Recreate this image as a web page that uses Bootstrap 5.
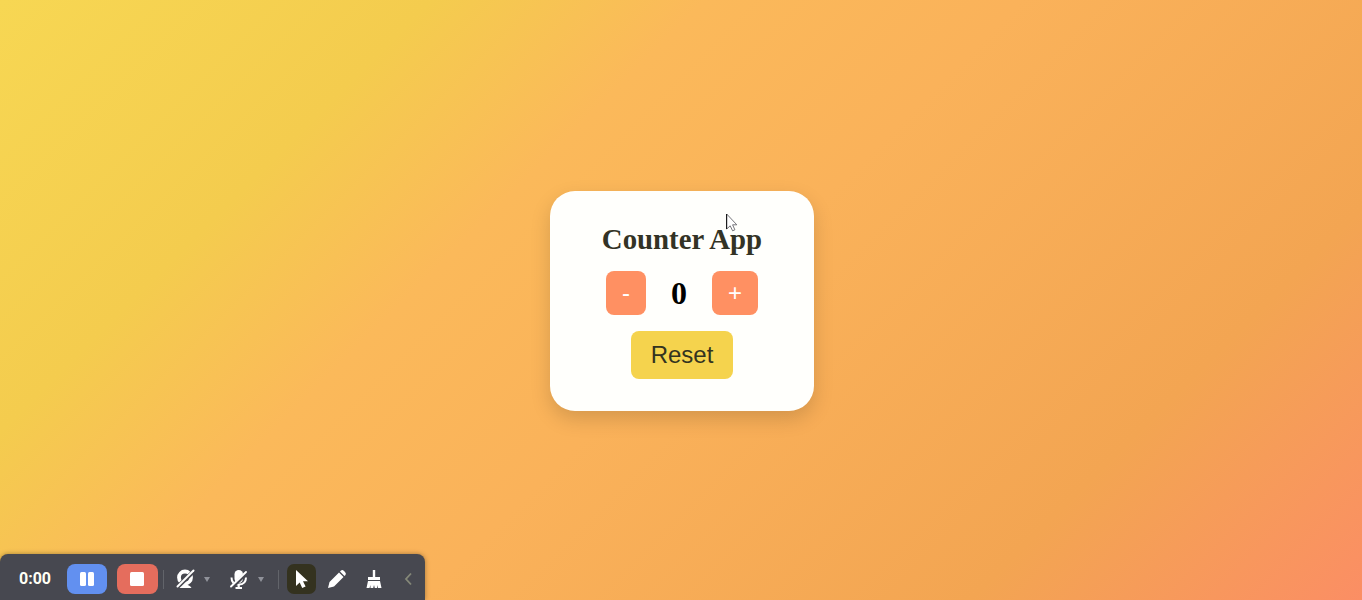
<!DOCTYPE html>
<html lang="en">
<head>
<meta charset="utf-8">
<meta name="viewport" content="width=device-width, initial-scale=1">
<title>Counter App</title>
<link href="https://cdn.jsdelivr.net/npm/bootstrap@5.3.0/dist/css/bootstrap.min.css" rel="stylesheet">
<style>
body{height:100vh;overflow:hidden;background:linear-gradient(135deg,#f7d753 0%,#f4cc4e 22%,#fbb95a 36%,#fab25a 52%,#f3a552 80%,#fb8e64 100%);font-family:"Liberation Serif",serif}
.counter{width:264px;height:220px;margin-top:1px;margin-left:2px;border-radius:25px;background:#fffffc;box-shadow:0 8px 20px rgba(0,0,0,.15);padding-top:32px}
.counter h1{font-size:28.8px;font-weight:700;line-height:33px;color:#333325;margin-bottom:15.500px}
.counter .btn{font-family:"Liberation Sans",Arial,sans-serif;border:0;border-radius:8px;line-height:28px}
.step,.step:hover{background:#ff9062;color:#fff}
.step{font-size:24px;height:44px;padding:8px 16px}
.value{font-size:32px;font-weight:700;line-height:44px;color:#000;width:66px}
.reset{background:#f5d34d;color:#333320;font-size:24px;width:102px;height:48px;margin-top:16px;padding:10px 0}
.pointer-arrow{left:726px;top:213px}
.recorder{left:0;bottom:0;width:425px;height:46px;background:#474850;border-radius:8px 8px 0 0;box-shadow:0 0 5px rgba(0,0,0,.35);font-family:Roboto,sans-serif;padding-left:19px;padding-top:4px}
.time{font-size:16px;font-weight:700;color:#fffff5;width:48px}
.rec-btn{width:40px;height:30px;border:0;border-radius:8px;padding:0}
.blue{background:#6290f0}.red{background:#e56d5d;width:41px}
.rule{width:1px;height:19px;background:#62646a}
.tool{width:29px;height:30px;border-radius:7px}
.tool.on{background:#34321f}
</style>
</head>
<body class="d-flex align-items-center justify-content-center">
<main class="counter d-flex flex-column align-items-center">
  <h1>Counter App</h1>
  <div class="d-flex align-items-center">
    <button class="btn step">-</button>
    <span class="value text-center">0</span>
    <button class="btn step">+</button>
  </div>
  <button class="btn reset">Reset</button>
</main>
<svg class="pointer-arrow position-absolute" width="13" height="20" viewBox="0 0 13 20"><path d="M.7 1v15l3.500-3.200 2.400 5 2.300-1-2.300-5h4.200z" fill="#fff" stroke="#66666c" stroke-width=".9"/><path d="M.6 1v15" stroke="#111"/></svg>
<div class="recorder position-absolute d-flex align-items-center">
  <span class="time">0:00</span>
  <button class="rec-btn blue d-flex align-items-center justify-content-center"><svg width="14" height="14"><rect width="6" height="14" rx="1.500" fill="#fff"/><rect x="8" width="6" height="14" rx="1.500" fill="#fff"/></svg></button>
  <button class="rec-btn red d-flex align-items-center" style="margin-left:10px;padding-left:13px"><svg width="14" height="14"><rect width="14" height="14" rx="1.500" fill="#fff"/></svg></button>
  <span class="rule" style="margin-left:5px"></span>
  <svg style="margin-left:11px" width="22" height="22" viewBox="0 0 22 22"><circle cx="10" cy="9.500" r="6" fill="none" stroke="#fff" stroke-width="3.800"/><path d="M3.500 20q2-3.500 6.500-3.500t6.500 3.500z" fill="#fff"/><path d="M2.500 19 18.500 3.500" stroke="#474850" stroke-width="4.200"/><path d="M2.500 18.500 18.500 2.500" stroke="#fff" stroke-width="2" stroke-linecap="round"/></svg>
  <svg style="margin-left:7px" width="7" height="5"><path d="M0 0h6L3 5z" fill="#90929a"/></svg>
  <svg style="margin-left:18px" width="20" height="21" viewBox="0 0 20 21"><rect x="5.500" y="1" width="8.500" height="13" rx="4.200" fill="#fff"/><path d="M2.500 8.500q0 7 7.200 7t7.300-7" fill="none" stroke="#fff" stroke-width="2"/><path d="M9.700 15v5M6.500 19h6.500" fill="none" stroke="#fff" stroke-width="2.200"/><path d="M2.800 18.500 17.500 4" stroke="#474850" stroke-width="3.800"/><path d="M2 17.500 17 3" stroke="#fff" stroke-width="1.900" stroke-linecap="round"/></svg>
  <svg style="margin-left:9px" width="7" height="5"><path d="M0 0h6L3 5z" fill="#90929a"/></svg>
  <span class="rule" style="margin-left:13px"></span>
  <span class="tool on d-flex align-items-center justify-content-center" style="margin-left:8px"><svg width="14" height="20" viewBox="0 0 14 20"><path d="M1 1v16l3.700-3.500 2.500 5.500 3.400-1.500-2.600-5.200H13z" fill="#fff"/></svg></span>
  <svg style="margin-left:11px" width="20" height="20" viewBox="0 0 20 20"><path d="M1 19l1.500-6L12 3.500l4.500 4.500L7 17.500zM13 2.500l1-1q1.500-1 3 .5l1 1q1.500 1.500.5 3l-1 1z" fill="#fff"/></svg>
  <svg style="margin-left:19px" width="16" height="20" viewBox="0 0 16 20"><path d="M6.800 1h2.400v7H14v3H2V8h4.800zM2 12h12l1.500 7H12l-1-3v3H8.800l-.8-3-.8 3H4.500v-3l-1 3H.5z" fill="#fff"/></svg>
  <svg style="margin-left:22px" width="9" height="14" viewBox="0 0 9 14"><path d="M7 1.500 2 7l5 5.500" fill="none" stroke="#858878" stroke-width="1.800"/></svg>
</div>
<script src="https://cdn.jsdelivr.net/npm/bootstrap@5.3.0/dist/js/bootstrap.bundle.min.js"></script>
</body>
</html>
